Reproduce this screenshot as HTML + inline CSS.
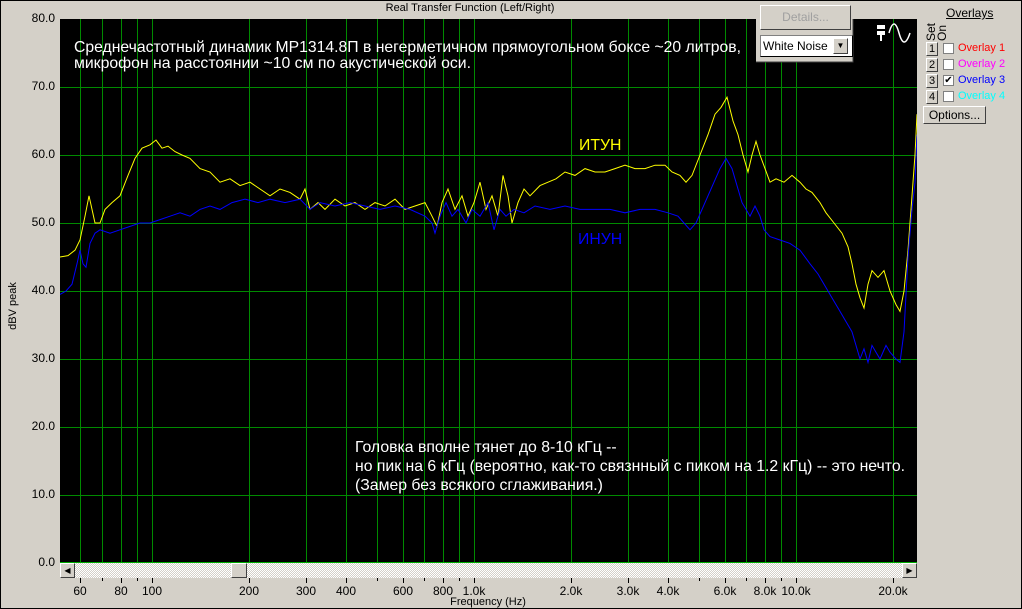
<!DOCTYPE html>
<html><head><meta charset="utf-8"><style>
body{margin:0;width:1022px;height:609px;overflow:hidden;background:#d4d0c8;font-family:"Liberation Sans",sans-serif;font-size:12px;position:relative}
.a{position:absolute}
.frame{left:0;top:0;width:1020px;height:607px;border:1px solid #000}
.btn{position:absolute;background:#d4d0c8;border:1px solid;border-color:#fff #404040 #404040 #fff;box-sizing:border-box;text-align:center}
.yl{position:absolute;right:967px;font-size:12px}
.xl{position:absolute;top:584px;font-size:12px;transform:translateX(-50%)}
.cb{position:absolute;width:11px;height:11px;background:#fff;border:1px solid #808080;box-sizing:border-box;font-size:10px;line-height:9px;text-align:center}
</style></head><body>
<div class="a frame"></div>
<div class="a" style="left:0;width:940px;top:2px;text-align:center;font-size:11px">Real Transfer Function (Left/Right)</div>
<svg class="a" style="left:60px;top:19px" width="857" height="544" viewBox="60 19 857 544">
<rect x="60" y="19" width="857" height="544" fill="#000"/>
<g stroke="#008a00" stroke-width="1">
<path d="M60 87.5H917M60 155.5H917M60 223.5H917M60 291.5H917M60 359.5H917M60 427.5H917M60 495.5H917"/>
<path d="M80.5 19V563M102.5 19V563M121.5 19V563M137.5 19V563M152.5 19V563M249.5 19V563M306.5 19V563M346.5 19V563M377.5 19V563M403.5 19V563M424.5 19V563M443.5 19V563M459.5 19V563M474.5 19V563M571.5 19V563M628.5 19V563M668.5 19V563M699.5 19V563M725.5 19V563M746.5 19V563M765.5 19V563M781.5 19V563M796.5 19V563M893.5 19V563"/>
</g>
<path d="M60 562.5H917" stroke="#0a0"/>
<g transform="translate(0,563) scale(1,-6.8)" fill="none">
<polyline vector-effect="non-scaling-stroke" stroke="#ffff00" stroke-width="1" points="60,45 68,45.2 75,46 80,47.5 85,51 89,54 92,52 95,50 100,50 105,52 112,53 120,54 128,57 135,59.5 142,61 150,61.5 156,62.2 162,61 168,61.3 175,60.5 182,60 190,59.5 200,58 210,57.5 220,56 230,56.5 240,55.5 250,56 260,55 270,54 280,55 290,54.5 300,53.5 305,55 310,52 318,53 325,52 335,53.5 345,52.5 355,53 365,52 375,53 385,52.5 395,53.5 405,52 415,52.5 425,53 432,51 437,49.5 442,53 448,55 455,52 462,54 468,51 474,53 480,56 486,52 492,54 498,51 503,57 508,54 512,50 518,53 524,55 530,54 540,55.5 548,56 556,56.5 565,57.5 575,57 585,58 595,57.5 605,57.5 615,58 625,58.5 635,58 645,58 655,58.5 665,58.5 672,57.5 680,57 686,56 692,57 700,60 708,63 715,66 721,67 727,68.5 733,65 738,63 743,60 748,57.5 752,60 756,62 760,60 765,58 770,56 776,56.5 784,56 792,57 800,56 806,55 812,54.5 820,53 826,51.5 834,50 842,48.5 848,46.5 852,44 856,41 860,39 864,37.5 868,41 872,43 878,42 884,43 890,40 896,38 900,37 904,40 908,46 912,54 915,60 917,66"/>
<polyline vector-effect="non-scaling-stroke" stroke="#0000ff" stroke-width="1" points="60,39.5 66,40 72,41 77,44 80,46 83,44 86,43.5 90,47 95,48.5 100,49 110,48.5 120,49 130,49.5 140,50 150,50 160,50.5 170,51 180,51.5 190,51 200,52 210,52.5 220,52 232,53 245,53.5 258,53 270,53.5 285,53 300,53.5 310,52 320,53 335,52.5 350,53 365,52.5 380,52 395,52.5 410,52 425,51 432,50 435,48.5 440,51 446,53 452,51 458,52 466,50 472,52 480,51 488,53 494,49 500,52 506,51 514,52 524,51.5 535,52.5 550,52 565,52.5 580,52 595,52 610,52 625,51.5 640,52 655,52 668,51.5 678,51 684,50 690,49 696,50 702,52 708,54 714,56 720,58 726,59.5 732,58 738,55 742,53 746,52 750,51 755,52.5 760,51 764,49 770,48 780,47.5 790,47 800,46 810,44 818,42.5 826,40.5 834,38.5 840,37 846,35.5 852,34 856,32 860,30 864,31.5 868,29.5 872,32 876,31 880,30 886,32 890,31 896,30 900,29.5 904,34 908,45 912,52 915,56 917,63"/>
</g>
<g font-family="Liberation Sans,sans-serif" font-size="15.8" fill="#fff">
<text x="74" y="52" textLength="667" lengthAdjust="spacingAndGlyphs">Среднечастотный динамик МР1314.8П в негерметичном прямоугольном боксе ~20 литров,</text>
<text x="74" y="68">микрофон на расстоянии ~10 см по акустической оси.</text>
<text x="355" y="452">Головка вполне тянет до 8-10 кГц --</text>
<text x="355" y="471" textLength="550" lengthAdjust="spacingAndGlyphs">но пик на 6 кГц (вероятно, как-то связнный с пиком на 1.2 кГц) -- это нечто.</text>
<text x="355" y="490">(Замер без всякого сглаживания.)</text>
<text x="579" y="150" fill="#ffff00">ИТУН</text>
<text x="578" y="244" fill="#0000ff">ИНУН</text>
</g>
<g fill="#fff"><rect x="877" y="25" width="8" height="4"/><rect x="877" y="31" width="8" height="4"/><rect x="880" y="35" width="2" height="6"/></g>
<path d="M889 33Q894 15 899 33T910 33" stroke="#fff" fill="none" stroke-width="1.5"/>
<rect x="756" y="0" width="97" height="62" fill="#d4d0c8"/>
<path d="M756 62H853V0" stroke="#404040" fill="none"/>
</svg>
<div class="btn" style="left:760px;top:5px;width:91px;height:25px;line-height:23px;color:#a0a0a0;font-size:12px">Details...</div>
<div class="a" style="left:760px;top:35px;width:89px;height:20px;background:#fff;border:1px solid #000;border-top-color:#808080;border-left-color:#808080;line-height:20px;font-size:12px;padding-left:2px">White Noise</div>
<div class="btn" style="left:833px;top:38px;width:15px;height:16px;font-size:8px;line-height:14px">▼</div>
<div class="yl" style="top:11px">80.0</div><div class="yl" style="top:79px">70.0</div><div class="yl" style="top:147px">60.0</div><div class="yl" style="top:215px">50.0</div><div class="yl" style="top:283px">40.0</div><div class="yl" style="top:351px">30.0</div><div class="yl" style="top:419px">20.0</div><div class="yl" style="top:487px">10.0</div><div class="yl" style="top:555px">0.0</div>
<div class="a" style="left:-12px;top:300px;transform:rotate(-90deg);font-size:11px;width:50px;text-align:center">dBV peak</div>
<div class="a" style="left:60px;top:563px;width:857px;height:15px;background:repeating-conic-gradient(#fff 0 25%,#d4d0c8 0 50%) 0 0/2px 2px"></div>
<div class="btn" style="left:60px;top:563px;width:15px;height:15px;font-size:8px;line-height:14px">◀</div>
<div class="btn" style="left:231px;top:563px;width:16px;height:15px"></div>
<div class="btn" style="left:902px;top:563px;width:15px;height:15px;font-size:8px;line-height:14px">▶</div>
<svg class="a" style="left:0;top:578px" width="1022" height="6"><path d="M80.5 0V5M102.5 0V3M121.5 0V5M137.5 0V3M152.5 0V5M249.5 0V5M306.5 0V5M346.5 0V5M377.5 0V3M403.5 0V5M424.5 0V3M443.5 0V5M459.5 0V3M474.5 0V5M571.5 0V5M628.5 0V5M668.5 0V5M699.5 0V3M725.5 0V5M746.5 0V3M765.5 0V5M781.5 0V3M796.5 0V5M893.5 0V5" stroke="#000"/></svg>
<div class="xl" style="left:80px">60</div><div class="xl" style="left:121px">80</div><div class="xl" style="left:152px">100</div><div class="xl" style="left:249px">200</div><div class="xl" style="left:306px">300</div><div class="xl" style="left:346px">400</div><div class="xl" style="left:403px">600</div><div class="xl" style="left:443px">800</div><div class="xl" style="left:474px">1.0k</div><div class="xl" style="left:571px">2.0k</div><div class="xl" style="left:628px">3.0k</div><div class="xl" style="left:668px">4.0k</div><div class="xl" style="left:725px">6.0k</div><div class="xl" style="left:765px">8.0k</div><div class="xl" style="left:796px">10.0k</div><div class="xl" style="left:893px">20.0k</div>
<div class="a" style="left:0;width:1022px;top:596px;text-align:center;font-size:11px"><span style="position:relative;left:-23px">Frequency (Hz)</span></div>
<div class="a" style="left:946px;top:6px;font-size:12px;text-decoration:underline">Overlays</div>
<div class="a" style="left:925px;top:20px;width:22px;height:20px;transform:rotate(-90deg);font-size:12px;line-height:11px">Set<br>On</div>
<div class="btn" style="left:926px;top:42px;width:12px;height:14px;line-height:12px;font-size:11px">1</div>
<div class="btn" style="left:926px;top:58px;width:12px;height:14px;line-height:12px;font-size:11px">2</div>
<div class="btn" style="left:926px;top:74px;width:12px;height:14px;line-height:12px;font-size:11px">3</div>
<div class="btn" style="left:926px;top:90px;width:12px;height:14px;line-height:12px;font-size:11px">4</div>
<div class="cb" style="left:943px;top:43px"></div><div class="cb" style="left:943px;top:59px"></div><div class="cb" style="left:943px;top:75px">✔</div><div class="cb" style="left:943px;top:91px"></div>
<div class="a" style="left:958px;top:42px;color:#f00;font-size:11px">Overlay 1</div>
<div class="a" style="left:958px;top:58px;color:#f0f;font-size:11px">Overlay 2</div>
<div class="a" style="left:958px;top:74px;color:#00f;font-size:11px">Overlay 3</div>
<div class="a" style="left:958px;top:90px;color:#0ff;font-size:11px">Overlay 4</div>
<div class="btn" style="left:923px;top:106px;width:63px;height:18px;line-height:16px;font-size:12px">Options...</div>
</body></html>
